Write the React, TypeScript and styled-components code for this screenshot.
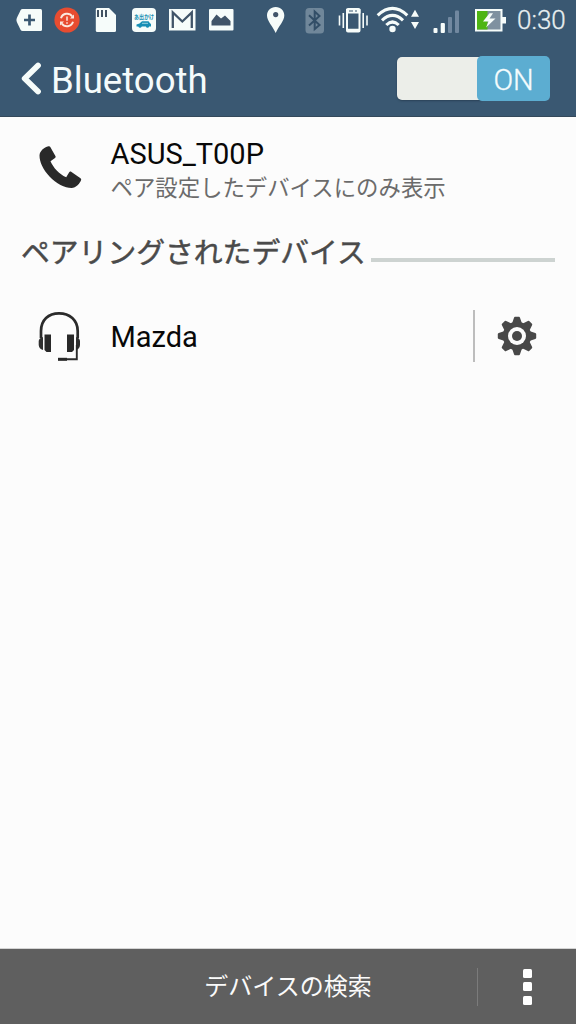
import React from 'react';
import styled, { createGlobalStyle } from 'styled-components';

const GlobalStyle = createGlobalStyle`
  * { box-sizing: border-box; }
  body { margin: 0; background: #fcfdfc; }
`;

const Screen = styled.div`
  width: 576px;
  height: 1024px;
  display: flex;
  flex-direction: column;
  background: #fcfcfc;
  font-family: Roboto, "Noto Sans CJK JP", sans-serif;
  overflow: hidden;
`;

const Header = styled.header`
  height: 117px;
  flex: none;
  background: #3a5872;
  border-bottom: 1px solid #34495b;
`;

const StatusBar = styled.div`
  height: 40px;
  display: flex;
  align-items: center;
`;

const StatusIcon = styled.svg<{ $gap: number }>`
  display: block;
  flex: none;
  overflow: visible;
  margin-left: ${p => p.$gap}px;
`;

const Clock = styled.span`
  margin-left: 10px;
  font-size: 26px;
  line-height: 40px;
  font-weight: 300;
  -webkit-text-stroke: 0.3px #e8eff0;
  color: #e8eff0;
  white-space: nowrap;
`;

const TitleBar = styled.div`
  height: 76px;
  display: flex;
  align-items: center;
  padding: 0 26px 0 20px;
`;

const Title = styled.h1`
  margin: 0 0 0 9px;
  flex: 1;
  font-size: 36.6px;
  line-height: 76px;
  font-weight: 400;
  color: #f4fbfb;
  padding-top: 5px;
`;

const Toggle = styled.button`
  width: 153px;
  height: 45px;
  margin-top: 1px;
  padding: 0;
  border: 0;
  display: flex;
  align-items: center;
  background: none;
  font: inherit;
`;

const ToggleTrack = styled.span`
  width: 84px;
  height: 43px;
  border-radius: 5px 0 0 5px;
  background: #eceee9;
  box-shadow: 0 1px 2px #2b4257;
`;

const ToggleThumb = styled.span`
  width: 73px;
  height: 45px;
  margin-left: -4px;
  border-radius: 5px;
  background: #5cadd1;
  color: #f5fcfd;
  font-size: 29px;
  line-height: 48px;
  font-weight: 300;
  -webkit-text-stroke: 0.3px #f5fcfd;
  text-align: center;
`;

const Content = styled.main`
  flex: 1;
  display: flex;
  flex-direction: column;
`;

const DeviceRow = styled.div<{ $height: number }>`
  height: ${p => p.$height}px;
  display: flex;
  align-items: center;
  padding-left: 36px;
`;

const DeviceIcon = styled.svg`
  display: block;
  flex: none;
  width: 48px;
  height: 56px;
`;

const DeviceText = styled.div<{ $drop: number }>`
  flex: 1;
  margin-left: 26.5px;
  padding-top: ${p => p.$drop}px;
`;

const DeviceName = styled.div`
  font-size: 29px;
  line-height: 34px;
  color: #080808;
`;

const DeviceNote = styled.div`
  font-size: 22.4px;
  line-height: 34px;
  font-weight: 400;
  color: #6b6b6b;
  white-space: nowrap;
`;

const SectionHeader = styled.div`
  height: 60px;
  display: flex;
  align-items: center;
  padding: 0 21px;
`;

const SectionTitle = styled.h2`
  margin: 0;
  padding-top: 4px;
  font-size: 28.8px;
  line-height: 56px;
  font-weight: 400;
  -webkit-text-stroke: 0.5px #4a4a4a;
  color: #4a4a4a;
  white-space: nowrap;
`;

const SectionRule = styled.span`
  flex: 1;
  height: 4px;
  margin: 18px 0 0 5px;
  background: #cdd3d1;
`;

const Divider = styled.span<{ $width: number; $height: number; $color: string }>`
  flex: none;
  width: ${p => p.$width}px;
  height: ${p => p.$height}px;
  background: ${p => p.$color};
`;

const SettingsButton = styled.button`
  width: 101px;
  padding: 0 0 0 22px;
  border: 0;
  background: none;
`;

const Footer = styled.footer`
  height: 76px;
  flex: none;
  display: flex;
  align-items: center;
  border-top: 1px solid #d4d4d4;
  background: #5f5f5f;
`;

const SearchButton = styled.button`
  width: 477px;
  padding: 0 0 0 99px;
  border: 0;
  background: none;
  font: inherit;
  font-size: 24px;
  line-height: 40px;
  color: #fafafa;
`;

const MenuButton = styled.button`
  flex: 1;
  padding: 0 0 0 1px;
  border: 0;
  background: none;
  display: flex;
  flex-direction: column;
  align-items: center;
  gap: 4.5px;
`;

const MenuDot = styled.span`
  width: 9px;
  height: 9px;
  border-radius: 1.5px;
  background: #fff;
`;

const AppBadge = styled.text`
  font: 700 6px "Noto Sans CJK JP", sans-serif;
`;

const light = '#f6fcfa';
const dark = '#3a5872';

const StatusIcons = () => (
  <>
    <StatusIcon $gap={16} width="26" height="28" viewBox="16 6 26 28">
      <path d="M22.5 9H40.5Q42 9 42 10.500V29.500Q42 31 40.500 31H22.500Q21.300 31 20.700 30L16.800 22Q16 20 16.800 18L20.700 10Q21.300 9 22.500 9Z" fill={light} />
      <path d="M29.500 14.500V25.500M24 20H35" stroke={dark} strokeWidth="2.700" />
    </StatusIcon>
    <StatusIcon $gap={12} width="26" height="28" viewBox="54 6 26 28">
      <circle cx="67" cy="20" r="12.600" fill="#e84c30" />
      <g fill="none" stroke="#fbe9df" strokeWidth="2">
        <path d="M61 18.200A6.300 6.300 0 0 1 72.200 16.500M73 21.800A6.300 6.300 0 0 1 61.800 23.500" />
        <path d="M67 16.500V20.800M67 22.200V23.700" strokeWidth="1.500" />
      </g>
      <path d="M74 14.500V18.500H70ZM60 25.500V21.500H64Z" fill="#fbe9df" />
    </StatusIcon>
    <StatusIcon $gap={15} width="22" height="28" viewBox="95 6 22 28">
      <path d="M97 8H109L116 15V30.500Q116 32 114.500 32H97.300Q95.800 32 95.800 30.500V9.500Q95.800 8 97 8Z" fill={light} />
      <path d="M98 10V17M102 10V17M106 10V17" stroke="#394b5b" strokeWidth="1.900" />
    </StatusIcon>
    <StatusIcon $gap={14} width="26" height="28" viewBox="131 6 26 28">
      <rect x="132" y="8" width="24" height="24" rx="4" fill={light} />
      <AppBadge x="134" y="18.500" textLength="20" lengthAdjust="spacingAndGlyphs" fill="#168fb2">あ出かけ</AppBadge>
      <path d="M136.500 26.500V24.500L139.500 23.500L142 21.200H148.500L150 23.200L151 24V26.500Z" fill="#178fb5" />
      <circle cx="140" cy="26.200" r="1.500" fill="#178fb5" /><circle cx="147.500" cy="26.200" r="1.500" fill="#178fb5" />
      <path d="M142 23.300H148" stroke="#b8e2ea" strokeWidth="0.800" />
    </StatusIcon>
    <StatusIcon $gap={12} width="27" height="28" viewBox="169 6 27 28">
      <rect x="169" y="9" width="26.500" height="21.500" fill={light} />
      <path d="M172.800 28V12.500L182.300 21.500L191.800 12.500V28" fill="none" stroke="#405468" strokeWidth="2.300" />
    </StatusIcon>
    <StatusIcon $gap={12} width="26" height="28" viewBox="208 6 26 28">
      <rect x="209" y="9" width="24.500" height="21.500" rx="1" fill={light} />
      <path d="M211.500 25.500V21L216.500 14.500L221 18.500L225 15.500L230.500 21V25.500Z" fill="#405468" />
    </StatusIcon>
    <StatusIcon $gap={32} width="20" height="28" viewBox="266 6 20 28">
      <path d="M275.700 7C270.500 7 267 10.700 267 15.500C267 21 272.500 26 275.700 33C278.800 26 284.300 21 284.300 15.500C284.300 10.700 280.900 7 275.700 7Z" fill={light} />
      <circle cx="275.700" cy="14.600" r="2.600" fill="#41556a" />
    </StatusIcon>
    <StatusIcon $gap={19} width="20" height="28" viewBox="305 6 20 28">
      <rect x="305.500" y="8" width="18.500" height="25.500" rx="3.500" fill="#70879a" />
      <path d="M309 15.200L319.500 25L314.700 29V11.500L319.500 16L309 25.500" fill="none" stroke="#324e67" strokeWidth="2" />
    </StatusIcon>
    <StatusIcon $gap={12} width="32" height="28" viewBox="337 6 32 28">
      <rect x="347" y="9" width="12.500" height="22.500" rx="1" fill="none" stroke={light} strokeWidth="2" />
      <path d="M346 9H360.500V13.500H346Z" fill={light} />
      <path d="M349 11H353M355 11H357" stroke={dark} strokeWidth="1.200" />
      <path d="M347 30H359.500" stroke={light} strokeWidth="2.500" />
      <path d="M339.500 15.500V25.500M343.300 13V28M363.200 13V28M367 15.500V25.500" stroke={light} strokeWidth="1.600" />
    </StatusIcon>
    <StatusIcon $gap={7} width="45" height="28" viewBox="376 6 45 28">
      <g fill="none" stroke={light} strokeWidth="3.100">
        <path d="M377.700 15.300Q392.500 1.500 407.300 15.300" />
        <path d="M382 20.300Q392.500 10.500 403 20.300" />
        <path d="M386.300 25Q392.500 19 398.700 25" />
      </g>
      <circle cx="392.500" cy="29" r="3.200" fill={light} />
      <path d="M415 9.800L419 16.800H411ZM415 29L419 22H411Z" fill={light} />
    </StatusIcon>
    <StatusIcon $gap={12} width="28" height="28" viewBox="433 6 28 28">
      <rect x="433.500" y="28" width="4" height="5" rx="1" fill={light} />
      <rect x="440.700" y="23" width="4.200" height="10" rx="1" fill={light} />
      <rect x="448" y="17" width="4" height="16" rx="1" fill="#7188a0" />
      <rect x="455" y="10.500" width="4" height="22.500" rx="1" fill="#7188a0" />
    </StatusIcon>
    <StatusIcon $gap={13} width="33" height="28" viewBox="474 6 33 28">
      <rect x="476" y="10" width="25.500" height="20.500" fill="#7f91a0" stroke={light} strokeWidth="2" />
      <rect x="477" y="11" width="10.500" height="18.500" fill="#4db514" />
      <rect x="502" y="17" width="4" height="6.500" fill={light} />
      <path d="M489.500 13.200L483 21.500H488.500L486 27.500L495.500 18.500H489.500L493 13.200Z" fill={light} />
    </StatusIcon>
  </>
);

const toothAngles = [0, 45, 90, 135, 180, 225, 270, 315];

export default function App() {
  return (
    <Screen>
      <GlobalStyle />
      <Header>
        <StatusBar>
          <StatusIcons />
          <Clock>0:30</Clock>
        </StatusBar>
        <TitleBar>
          <svg width="22" height="36" viewBox="20 60 22 36">
            <path d="M38 65.500L24.700 78.500L38 91.500" fill="none" stroke={light} strokeWidth="5.800" strokeLinecap="round" strokeLinejoin="round" />
          </svg>
          <Title>Bluetooth</Title>
          <Toggle>
            <ToggleTrack />
            <ToggleThumb>ON</ToggleThumb>
          </Toggle>
        </TitleBar>
      </Header>
      <Content>
        <DeviceRow $height={104}>
          <DeviceIcon viewBox="36 141 48 56">
            <path d="M48.500 146.300C44 147.500 39.700 151 39.500 155.500C39.500 162 43 169.500 49.500 176.500C56 183.500 65 188 71.500 188C76 188 80 183.500 81.200 179.800C81.300 179 81 178.600 80.500 178.200L71.500 172C70.500 171.400 69.700 171.500 69.200 172.300L66.200 177.300C59 174 53.500 168 50.500 161.300L55 158C55.800 157.400 55.800 156.600 55.400 156L50.300 147C49.900 146.300 49.300 146.100 48.500 146.300Z" fill="#292929" />
          </DeviceIcon>
          <DeviceText $drop={4}>
            <DeviceName>ASUS_T00P</DeviceName>
            <DeviceNote>ペア設定したデバイスにのみ表示</DeviceNote>
          </DeviceText>
        </DeviceRow>
        <SectionHeader>
          <SectionTitle>ペアリングされたデバイス</SectionTitle>
          <SectionRule />
        </SectionHeader>
        <DeviceRow $height={110}>
          <DeviceIcon viewBox="36 308 48 56">
            <path d="M41 338V331C41 320 48.500 313.300 59 313.300S77.700 320 77.700 331V338" fill="none" stroke="#2b2b2b" strokeWidth="2.700" />
            <path d="M43 337V350Q39 349 38.700 345V341Q39 338 43 337ZM76 337V350Q79.800 349 80 345V341Q79.800 338 76 337Z" fill="#303030" />
            <path d="M44.500 334.500H51V352H46.500L44.500 350ZM67 334.500H74V350L72 352H67Z" fill="#292929" />
            <path d="M76.800 345V359.300H58" fill="none" stroke="#2b2b2b" strokeWidth="1.900" />
            <path d="M58 359.300H67" stroke="#292929" strokeWidth="3" />
          </DeviceIcon>
          <DeviceText $drop={2}>
            <DeviceName>Mazda</DeviceName>
          </DeviceText>
          <Divider $width={2} $height={52} $color="#bdbdbd" />
          <SettingsButton>
            <svg width="40" height="40" viewBox="-20 -20 40 40" style={{ display: 'block' }}>
              <g fill="#484848">
                {toothAngles.map(a => (
                  <path key={a} transform={`rotate(${a})`} d="M-4.800 -13L-3 -18.300Q-2.700 -19.200 -2 -19.200H2Q2.700 -19.200 3 -18.300L4.800 -13Z" />
                ))}
                <circle r="14.200" />
              </g>
              <circle r="9" fill="#fcfcfc" />
              <circle r="5" fill="#484848" />
            </svg>
          </SettingsButton>
        </DeviceRow>
      </Content>
      <Footer>
        <SearchButton>デバイスの検索</SearchButton>
        <Divider $width={1} $height={38} $color="#7b7b7b" />
        <MenuButton>
          <MenuDot />
          <MenuDot />
          <MenuDot />
        </MenuButton>
      </Footer>
    </Screen>
  );
}
